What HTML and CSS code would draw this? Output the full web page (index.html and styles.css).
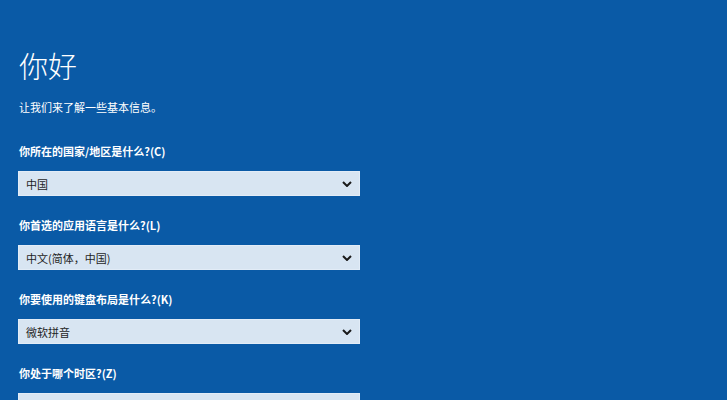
FILE: index.html
```html
<!DOCTYPE html>
<html lang="zh-CN">
<head>
<meta charset="utf-8">
<link rel="stylesheet" href="styles.css">
</head>
<body>
<main class="page">
  <h1 class="title">你好</h1>
  <p class="intro">让我们来了解一些基本信息。</p>
  <div class="field">
    <div class="label">你所在的国家/地区是什么?(C)</div>
    <div class="select"><span>中国</span><svg class="chev" viewBox="0 0 10 6"><path d="M1 1 L5 5 L9 1" /></svg></div>
  </div>
  <div class="field">
    <div class="label">你首选的应用语言是什么?(L)</div>
    <div class="select"><span>中文(简体，中国)</span><svg class="chev" viewBox="0 0 10 6"><path d="M1 1 L5 5 L9 1" /></svg></div>
  </div>
  <div class="field">
    <div class="label">你要使用的键盘布局是什么?(K)</div>
    <div class="select"><span>微软拼音</span><svg class="chev" viewBox="0 0 10 6"><path d="M1 1 L5 5 L9 1" /></svg></div>
  </div>
  <div class="field">
    <div class="label">你处于哪个时区?(Z)</div>
    <div class="select"></div>
  </div>
</main>
</body>
</html>
```
FILE: styles.css
```css
html, body {
  margin: 0;
  padding: 0;
  height: 100%;
  overflow: hidden;
}
body {
  background: #0a5aa6;
  color: #ffffff;
  font-family: "Noto Sans CJK SC", "Noto Sans", sans-serif;
}
.page {
  padding: 47px 0 0 18px;
  display: flex;
  flex-direction: column;
}
.title {
  margin: 0;
  font-size: 29px;
  line-height: 36px;
  font-weight: 300;
  padding-left: 1px;
}
.intro {
  margin: 16px 0 28px 1px;
  font-size: 11px;
  line-height: 16px;
}
.field {
  display: flex;
  flex-direction: column;
  margin-bottom: 21px;
}
.label {
  font-size: 11px;
  line-height: 16px;
  font-weight: 700;
  margin: 0 0 12px 1px;
}
.select {
  width: 342px;
  height: 25px;
  box-sizing: border-box;
  background: #d8e5f2;
  border: 1px solid #e2ecf7;
  color: #1f1f1f;
  display: flex;
  align-items: center;
  justify-content: space-between;
  padding: 0 7px 0 7px;
  font-size: 11px;
}
.chev {
  width: 10px;
  height: 6px;
  fill: none;
  stroke: #1a1a1a;
  stroke-width: 2;
}
```
